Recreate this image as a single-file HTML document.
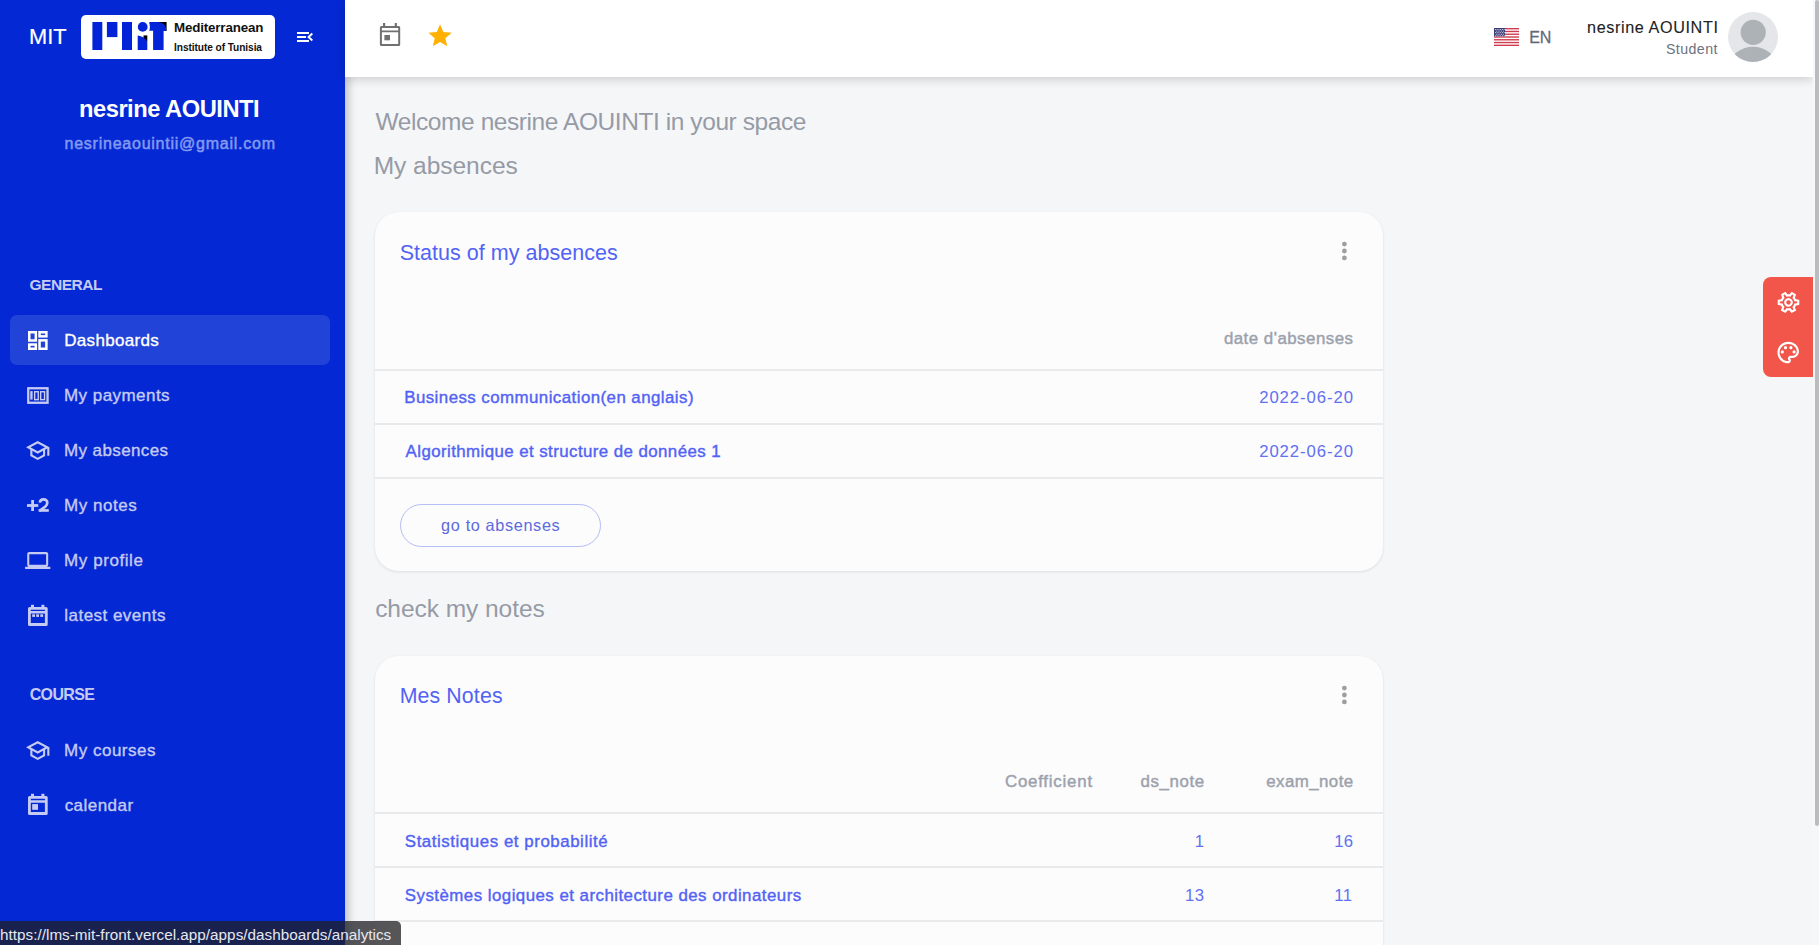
<!DOCTYPE html>
<html><head><meta charset="utf-8"><title>Dashboard</title>
<style>
*{margin:0;padding:0;box-sizing:border-box}
html,body{width:1819px;height:945px;overflow:hidden;background:#f5f6f8;font-family:"Liberation Sans",sans-serif}
.t{position:absolute;white-space:nowrap}
.bm{display:inline-block;width:0;height:0;vertical-align:baseline}
.abs{position:absolute}
#sidebar{left:0;top:0;width:345px;height:945px;background:#0429d4;box-shadow:2px 0 10px rgba(0,0,0,0.28)}
#header{left:345px;top:0;width:1468px;height:77px;background:#fff;box-shadow:0 2px 10px rgba(0,0,0,0.18)}
.card{position:absolute;left:375px;width:1008px;background:#fcfcfd;border-radius:24px;box-shadow:0 1px 3px rgba(0,0,0,0.10)}
.hl{position:absolute;left:375px;width:1008px;height:2px;background:#e9eaec}
</style></head><body>
<div id="sidebar" class="abs"></div>
<div id="header" class="abs"></div>
<div class="abs" style="left:10px;top:315px;width:320px;height:50px;border-radius:7px;background:#2143d8"></div>
<div class="abs" style="left:81px;top:15px;width:194px;height:44px;border-radius:5px;background:#fff"></div>
<div class="card" style="top:212px;height:359px"></div>
<div class="card" style="top:656px;height:320px"></div>
<div class="hl" style="top:369px"></div>
<div class="hl" style="top:423px"></div>
<div class="hl" style="top:477px"></div>
<div class="hl" style="top:812px"></div>
<div class="hl" style="top:866px"></div>
<div class="hl" style="top:920px"></div>
<div class="abs" style="left:400px;top:504px;width:201px;height:43px;border-radius:22px;border:1px solid #b4bdf4"></div>
<div class="abs" style="left:1763px;top:277px;width:50px;height:100px;border-radius:8px 0 0 8px;background:#f2564b"></div>
<div class="abs" style="left:1813px;top:0;width:6px;height:945px;background:#f6f7f9"></div>
<div class="abs" style="left:1815px;top:0;width:4px;height:826px;border-radius:2px;background:#bbbcbf"></div>
<svg class="abs" style="left:0;top:0" width="1819" height="945" viewBox="0 0 1819 945">
<defs>
<clipPath id="avc"><circle cx="1753" cy="37" r="25"/></clipPath>
<pattern id="stars" x="1494" y="28" width="2" height="2" patternUnits="userSpaceOnUse"><rect width="2" height="2" fill="#3d3f7a"/><rect x="0.5" y="0.5" width="1" height="1" fill="#c9cbe0"/></pattern>
</defs>
<!-- logo -->
<g fill="#0323d8">
<rect x="92.4" y="22" width="9.9" height="28"/>
<rect x="106.9" y="22" width="10.5" height="15.1"/>
<rect x="122" y="22" width="10" height="28"/>
</g>
<rect x="143.5" y="35.4" width="3.8" height="6" fill="#000"/>
<path d="M137.7 35.4 Q144.5 36.2 147.3 41.8 V50 H137.7Z" fill="#0323d8"/>
<rect x="158" y="22" width="8.6" height="8.8" fill="#000"/>
<path d="M149.3 22 H158 A8.6 8.8 0 0 1 166.6 30.8 H149.3Z" fill="#0323d8"/>
<rect x="153.1" y="30" width="10.5" height="20" fill="#0323d8"/>
<circle cx="142.7" cy="26.9" r="7.2" fill="#fff"/>
<circle cx="142.7" cy="26.9" r="4.9" fill="#0323d8"/>
<!-- hamburger -->
<g stroke="#fff" stroke-width="2" fill="none">
<path d="M297 33H309M297 37H306M297 41H309"/>
<path d="M312.3 33.6 L308.6 37 L312.3 40.4"/>
</g>
<!-- dashboards icon -->
<g stroke="#fff" stroke-width="2.5" fill="none">
<rect x="29.25" y="332.25" width="6.6" height="8.25"/>
<rect x="39.55" y="332.25" width="6.85" height="4.1"/>
<rect x="29.25" y="344.55" width="6.6" height="4.2"/>
<rect x="39.55" y="340.35" width="6.85" height="8.4"/>
</g>
<!-- payments icon -->
<g fill="none" stroke="#c6cbf3">
<rect x="28.25" y="388.25" width="19.3" height="14.5" stroke-width="2.3"/>
<rect x="34.65" y="391.75" width="3.6" height="7.9" stroke-width="1.4"/>
<rect x="40.65" y="391.75" width="3.9" height="7.9" stroke-width="1.4"/>
</g>
<rect x="30.3" y="391.1" width="2.3" height="8.5" fill="#c6cbf3"/>
<!-- school icons -->
<path transform="translate(25,437.8) scale(1.06)" fill="#c6cbf3" d="M12 3L1 9l4 2.18v6L12 21l7-3.82v-6l2-1.09V17h2V9L12 3zm6.82 6L12 12.72 5.18 9 12 5.28 18.82 9zM17 15.99l-5 2.73-5-2.73v-3.72L12 15l5-2.73v3.72z"/>
<path transform="translate(25,737.8) scale(1.06)" fill="#c6cbf3" d="M12 3L1 9l4 2.18v6L12 21l7-3.82v-6l2-1.09V17h2V9L12 3zm6.82 6L12 12.72 5.18 9 12 5.28 18.82 9zM17 15.99l-5 2.73-5-2.73v-3.72L12 15l5-2.73v3.72z"/>
<!-- +2 -->
<g fill="#c6cbf3">
<rect x="27" y="504.1" width="11.2" height="2.8"/>
<rect x="31.2" y="500" width="2.8" height="11"/>
</g>
<path d="M39.9 502.6 C40 500.5 41.6 499.3 43.6 499.3 C45.7 499.3 47.3 500.7 47.3 502.7 C47.3 504.1 46.6 505.3 45.4 506.5 L39.6 510.9" fill="none" stroke="#c6cbf3" stroke-width="2.7"/><rect x="38.6" y="509.1" width="10.2" height="2.7" fill="#c6cbf3"/>
<!-- laptop -->
<path transform="translate(25.1,547.9) scale(1.05)" fill="#c6cbf3" d="M20 18c1.1 0 1.99-.9 1.99-2L22 6c0-1.1-.9-2-2-2H4c-1.1 0-2 .9-2 2v10c0 1.1.9 2 2 2H0v2h24v-2h-4zM4 6h16v10H4V6z"/>
<!-- events calendar -->
<g fill="#c6cbf3">
<path fill-rule="evenodd" d="M29.5 607h16.7a1.5 1.5 0 0 1 1.5 1.5v15.9a1.5 1.5 0 0 1-1.5 1.5h-16.7a1.5 1.5 0 0 1-1.5-1.5v-15.9a1.5 1.5 0 0 1 1.5-1.5z M30.8 613.6v9.5h14.1v-9.5z M30.8 609.8v1.3h14.1v-1.3z"/>
<rect x="31" y="604.8" width="3" height="3"/>
<rect x="41.4" y="604.8" width="3" height="3"/>
<rect x="32.2" y="614.3" width="2.8" height="2.6"/>
<rect x="36.2" y="614.3" width="2.8" height="2.6"/>
<rect x="40.3" y="614.3" width="2.8" height="2.6"/>
</g>
<!-- calendar -->
<g fill="#c6cbf3">
<path fill-rule="evenodd" d="M29.5 796h16.7a1.5 1.5 0 0 1 1.5 1.5v15.9a1.5 1.5 0 0 1-1.5 1.5h-16.7a1.5 1.5 0 0 1-1.5-1.5v-15.9a1.5 1.5 0 0 1 1.5-1.5z M30.8 802.7v9.4h14.1v-9.4z M30.8 798.8v1.4h14.1v-1.4z"/>
<rect x="31" y="793.8" width="3" height="3"/>
<rect x="41.4" y="793.8" width="3" height="3"/>
<rect x="32.2" y="804.1" width="5.8" height="5.7"/>
</g>
<!-- header calendar -->
<g fill="#707070">
<path fill-rule="evenodd" d="M381.4 25.9h17.3a1.5 1.5 0 0 1 1.5 1.5v17.1a1.5 1.5 0 0 1-1.5 1.5h-17.3a1.5 1.5 0 0 1-1.5-1.5v-17.1a1.5 1.5 0 0 1 1.5-1.5z M381.9 32.3v11.7h16.3v-11.7z M381.9 27.9v2.5h16.3v-2.5z"/>
<rect x="383" y="23" width="2.2" height="3.5"/>
<rect x="394.7" y="23" width="2.2" height="3.5"/>
<rect x="384.4" y="35" width="5.6" height="5.3"/>
</g>
<!-- star -->
<path transform="translate(426.07,21.87) scale(1.165)" fill="#ffb000" d="M12 17.27L18.18 21l-1.64-7.03L22 9.24l-7.19-.61L12 2 9.19 8.63 2 9.24l5.46 4.73L5.82 21z"/>
<!-- flag -->
<g>
<rect x="1494" y="28" width="25" height="18" fill="#fff"/>
<g fill="#cf3b50">
<rect x="1494" y="28" width="25" height="1.385"/>
<rect x="1494" y="30.77" width="25" height="1.385"/>
<rect x="1494" y="33.54" width="25" height="1.385"/>
<rect x="1494" y="36.31" width="25" height="1.385"/>
<rect x="1494" y="39.08" width="25" height="1.385"/>
<rect x="1494" y="41.85" width="25" height="1.385"/>
<rect x="1494" y="44.62" width="25" height="1.385"/>
</g>
<rect x="1494" y="28" width="11" height="8.3" fill="#3b3d78"/><g fill="#e6e7f0"><rect x="1495.00" y="29.00" width="0.9" height="0.9"/><rect x="1496.75" y="29.00" width="0.9" height="0.9"/><rect x="1498.50" y="29.00" width="0.9" height="0.9"/><rect x="1500.25" y="29.00" width="0.9" height="0.9"/><rect x="1502.00" y="29.00" width="0.9" height="0.9"/><rect x="1503.75" y="29.00" width="0.9" height="0.9"/><rect x="1495.88" y="30.60" width="0.9" height="0.9"/><rect x="1497.62" y="30.60" width="0.9" height="0.9"/><rect x="1499.38" y="30.60" width="0.9" height="0.9"/><rect x="1501.12" y="30.60" width="0.9" height="0.9"/><rect x="1502.88" y="30.60" width="0.9" height="0.9"/><rect x="1495.00" y="32.20" width="0.9" height="0.9"/><rect x="1496.75" y="32.20" width="0.9" height="0.9"/><rect x="1498.50" y="32.20" width="0.9" height="0.9"/><rect x="1500.25" y="32.20" width="0.9" height="0.9"/><rect x="1502.00" y="32.20" width="0.9" height="0.9"/><rect x="1503.75" y="32.20" width="0.9" height="0.9"/><rect x="1495.88" y="33.80" width="0.9" height="0.9"/><rect x="1497.62" y="33.80" width="0.9" height="0.9"/><rect x="1499.38" y="33.80" width="0.9" height="0.9"/><rect x="1501.12" y="33.80" width="0.9" height="0.9"/><rect x="1502.88" y="33.80" width="0.9" height="0.9"/><rect x="1495.00" y="35.40" width="0.9" height="0.9"/><rect x="1496.75" y="35.40" width="0.9" height="0.9"/><rect x="1498.50" y="35.40" width="0.9" height="0.9"/><rect x="1500.25" y="35.40" width="0.9" height="0.9"/><rect x="1502.00" y="35.40" width="0.9" height="0.9"/><rect x="1503.75" y="35.40" width="0.9" height="0.9"/></g>
</g>
<!-- avatar -->
<circle cx="1753" cy="37" r="25" fill="#e4e6e9"/>
<g clip-path="url(#avc)" fill="#adb2b7">
<circle cx="1753.2" cy="32.3" r="12.6"/>
<ellipse cx="1753" cy="66" rx="23" ry="19.3"/>
</g>
<!-- kebabs -->
<g fill="#9e9e9e">
<circle cx="1344.4" cy="244.1" r="2.4"/><circle cx="1344.4" cy="251" r="2.4"/><circle cx="1344.4" cy="257.9" r="2.4"/>
<circle cx="1344.4" cy="688.1" r="2.4"/><circle cx="1344.4" cy="695" r="2.4"/><circle cx="1344.4" cy="701.9" r="2.4"/>
</g>
<!-- gear -->
<path transform="translate(1788.5,302.4) scale(1.08) rotate(30) translate(-12,-12)" fill="#fff" d="M12,8A4,4 0 0,1 16,12A4,4 0 0,1 12,16A4,4 0 0,1 8,12A4,4 0 0,1 12,8M12,10A2,2 0 0,0 10,12A2,2 0 0,0 12,14A2,2 0 0,0 14,12A2,2 0 0,0 12,10M10,22C9.75,22 9.54,21.82 9.5,21.58L9.13,18.93C8.5,18.68 7.96,18.34 7.44,17.94L4.950,18.95C4.73,19.03 4.46,18.95 4.34,18.73L2.34,15.27C2.21,15.05 2.27,14.78 2.46,14.63L4.57,12.97L4.5,12L4.57,11L2.46,9.37C2.27,9.22 2.21,8.95 2.34,8.73L4.34,5.27C4.46,5.05 4.73,4.96 4.95,5.05L7.44,6.05C7.96,5.66 8.5,5.32 9.13,5.07L9.5,2.42C9.54,2.18 9.75,2 10,2H14C14.25,2 14.46,2.18 14.5,2.42L14.87,5.07C15.5,5.32 16.04,5.66 16.56,6.05L19.05,5.05C19.27,4.96 19.54,5.05 19.66,5.27L21.66,8.73C21.79,8.95 21.73,9.22 21.54,9.37L19.43,11L19.5,12L19.43,13L21.54,14.63C21.73,14.78 21.79,15.05 21.66,15.27L19.66,18.73C19.54,18.95 19.27,19.04 19.05,18.95L16.56,17.95C16.04,18.34 15.5,18.68 14.87,18.93L14.5,21.58C14.46,21.82 14.25,22 14,22H10M11.25,4L10.88,6.61C9.68,6.86 8.62,7.5 7.85,8.39L5.44,7.35L4.69,8.65L6.8,10.2C6.4,11.37 6.4,12.64 6.8,13.8L4.68,15.36L5.43,16.66L7.86,15.62C8.63,16.5 9.68,17.14 10.87,17.38L11.24,20H12.76L13.13,17.39C14.32,17.140 15.37,16.5 16.14,15.62L18.57,16.66L19.32,15.36L17.2,13.81C17.6,12.64 17.6,11.37 17.2,10.2L19.31,8.65L18.56,7.35L16.15,8.39C15.38,7.5 14.33,6.86 13.12,6.62L12.75,4H11.25Z"/>
<!-- palette -->
<g transform="translate(1788.2,352.5) scale(1.075) translate(-12,-12)" fill="#fff">
<path d="M12 22C6.49 22 2 17.51 2 12S6.49 2 12 2s10 4.04 10 9c0 3.31-2.69 6-6 6h-1.77c-.28 0-.5.22-.5.5 0 .12.05.23.13.33.41.47.64 1.06.64 1.67 0 1.38-1.12 2.5-2.5 2.5zm0-18c-4.410 0-8 3.59-8 8s3.59 8 8 8c.28 0 .5-.22.5-.5 0-.16-.08-.28-.14-.35-.41-.46-.63-1.05-.63-1.65 0-1.38 1.12-2.5 2.5-2.5H16c2.21 0 4-1.79 4-4 0-3.86-3.59-7-8-7z"/>
<circle cx="6.5" cy="11.5" r="1.5"/><circle cx="9.5" cy="7.5" r="1.5"/><circle cx="14.5" cy="7.5" r="1.5"/><circle cx="17.5" cy="11.5" r="1.5"/>
</g>
</svg>

<div class="t" id="t0" style="left:29.01px;top:26.01px;font-size:21.80px;line-height:21.80px;letter-spacing:-0.024px;font-weight:normal;color:#fff;-webkit-text-stroke:0.2px #fff;">MIT<span class="bm"></span></div>
<div class="t" id="t1" style="left:173.91px;top:21.01px;font-size:13.37px;line-height:13.37px;letter-spacing:-0.149px;font-weight:bold;color:#111;">Mediterranean<span class="bm"></span></div>
<div class="t" id="t2" style="left:174.12px;top:42.70px;font-size:10.17px;line-height:10.17px;letter-spacing:-0.085px;font-weight:bold;color:#111;">Institute of Tunisia<span class="bm"></span></div>
<div class="t" id="t3" style="left:79.04px;top:97.60px;font-size:23.69px;line-height:23.69px;letter-spacing:-0.486px;font-weight:bold;color:#fff;">nesrine AOUINTI<span class="bm"></span></div>
<div class="t" id="t4" style="left:64.54px;top:135.81px;font-size:16.00px;line-height:16.00px;letter-spacing:0.758px;font-weight:normal;color:#8499f0;-webkit-text-stroke:0.5px #8499f0;">nesrineaouintii@gmail.com<span class="bm"></span></div>
<div class="t" id="t5" style="left:29.56px;top:276.81px;font-size:15.55px;line-height:15.55px;letter-spacing:-0.520px;font-weight:bold;color:#c6cbf3;">GENERAL<span class="bm"></span></div>
<div class="t" id="t6" style="left:29.74px;top:687.11px;font-size:15.99px;line-height:15.99px;letter-spacing:-0.665px;font-weight:bold;color:#c6cbf3;">COURSE<span class="bm"></span></div>
<div class="t" id="t7" style="left:64.20px;top:332.10px;font-size:17.01px;line-height:17.01px;letter-spacing:0.335px;font-weight:normal;color:#fff;-webkit-text-stroke:0.35px #fff;">Dashboards<span class="bm"></span></div>
<div class="t" id="t8" style="left:64.00px;top:387.22px;font-size:17.01px;line-height:17.01px;letter-spacing:0.449px;font-weight:normal;color:#c6cbf3;-webkit-text-stroke:0.35px #c6cbf3;">My payments<span class="bm"></span></div>
<div class="t" id="t9" style="left:64.00px;top:442.10px;font-size:17.01px;line-height:17.01px;letter-spacing:0.392px;font-weight:normal;color:#c6cbf3;-webkit-text-stroke:0.35px #c6cbf3;">My absences<span class="bm"></span></div>
<div class="t" id="t10" style="left:64.00px;top:497.01px;font-size:17.01px;line-height:17.01px;letter-spacing:0.531px;font-weight:normal;color:#c6cbf3;-webkit-text-stroke:0.35px #c6cbf3;">My notes<span class="bm"></span></div>
<div class="t" id="t11" style="left:64.00px;top:552.01px;font-size:17.01px;line-height:17.01px;letter-spacing:0.582px;font-weight:normal;color:#c6cbf3;-webkit-text-stroke:0.35px #c6cbf3;">My profile<span class="bm"></span></div>
<div class="t" id="t12" style="left:64.25px;top:607.01px;font-size:17.01px;line-height:17.01px;letter-spacing:0.474px;font-weight:normal;color:#c6cbf3;-webkit-text-stroke:0.35px #c6cbf3;">latest events<span class="bm"></span></div>
<div class="t" id="t13" style="left:64.00px;top:742.01px;font-size:17.01px;line-height:17.01px;letter-spacing:0.508px;font-weight:normal;color:#c6cbf3;-webkit-text-stroke:0.35px #c6cbf3;">My courses<span class="bm"></span></div>
<div class="t" id="t14" style="left:64.68px;top:797.01px;font-size:17.01px;line-height:17.01px;letter-spacing:0.453px;font-weight:normal;color:#c6cbf3;-webkit-text-stroke:0.35px #c6cbf3;">calendar<span class="bm"></span></div>
<div class="t" id="t15" style="left:1529.19px;top:29.81px;font-size:16.00px;line-height:16.00px;letter-spacing:-0.200px;font-weight:normal;color:#5f6b7a;-webkit-text-stroke:0.3px #5f6b7a;">EN<span class="bm"></span></div>
<div class="t" id="t16" style="left:1587.02px;top:18.81px;font-size:16.20px;line-height:16.20px;letter-spacing:0.610px;font-weight:normal;color:#222;-webkit-text-stroke:0.1px #222;">nesrine AOUINTI<span class="bm"></span></div>
<div class="t" id="t17" style="left:1665.96px;top:41.60px;font-size:14.20px;line-height:14.20px;letter-spacing:0.433px;font-weight:normal;color:#6b7280;">Student<span class="bm"></span></div>
<div class="t" id="t18" style="left:375.59px;top:109.72px;font-size:24.50px;line-height:24.50px;letter-spacing:-0.427px;font-weight:normal;color:#959ba6;">Welcome nesrine AOUINTI in your space<span class="bm"></span></div>
<div class="t" id="t19" style="left:373.68px;top:153.61px;font-size:24.56px;line-height:24.56px;letter-spacing:-0.052px;font-weight:normal;color:#959ba6;">My absences<span class="bm"></span></div>
<div class="t" id="t20" style="left:375.16px;top:596.80px;font-size:24.56px;line-height:24.56px;letter-spacing:-0.071px;font-weight:normal;color:#959ba6;">check my notes<span class="bm"></span></div>
<div class="t" id="t21" style="left:399.72px;top:242.91px;font-size:21.51px;line-height:21.51px;letter-spacing:0.027px;font-weight:normal;color:#5263f4;">Status of my absences<span class="bm"></span></div>
<div class="t" id="t22" style="left:1223.89px;top:330.51px;font-size:16.86px;line-height:16.86px;letter-spacing:0.489px;font-weight:normal;color:#9ca2ac;-webkit-text-stroke:0.45px #9ca2ac;">date d'absenses<span class="bm"></span></div>
<div class="t" id="t23" style="left:404.22px;top:390.01px;font-size:16.86px;line-height:16.86px;letter-spacing:0.447px;font-weight:normal;color:#5262f4;-webkit-text-stroke:0.4px #5262f4;">Business communication(en anglais)<span class="bm"></span></div>
<div class="t" id="t24" style="left:405.57px;top:444.21px;font-size:16.86px;line-height:16.86px;letter-spacing:0.423px;font-weight:normal;color:#5262f4;-webkit-text-stroke:0.4px #5262f4;">Algorithmique et structure de données 1<span class="bm"></span></div>
<div class="t" id="t25" style="left:1259.16px;top:389.91px;font-size:16.72px;line-height:16.72px;letter-spacing:0.932px;font-weight:normal;color:#6270f1;">2022-06-20<span class="bm"></span></div>
<div class="t" id="t26" style="left:1259.16px;top:443.91px;font-size:16.72px;line-height:16.72px;letter-spacing:0.932px;font-weight:normal;color:#6270f1;">2022-06-20<span class="bm"></span></div>
<div class="t" id="t27" style="left:441.12px;top:517.00px;font-size:16.28px;line-height:16.28px;letter-spacing:0.635px;font-weight:normal;color:#5b6ade;">go to absenses<span class="bm"></span></div>
<div class="t" id="t28" style="left:399.65px;top:685.80px;font-size:21.30px;line-height:21.30px;letter-spacing:0.140px;font-weight:normal;color:#5263f4;">Mes Notes<span class="bm"></span></div>
<div class="t" id="t29" style="left:1004.94px;top:774.01px;font-size:16.86px;line-height:16.86px;letter-spacing:0.782px;font-weight:normal;color:#9ca2ac;-webkit-text-stroke:0.45px #9ca2ac;">Coefficient<span class="bm"></span></div>
<div class="t" id="t30" style="left:1140.59px;top:774.01px;font-size:16.86px;line-height:16.86px;letter-spacing:0.576px;font-weight:normal;color:#9ca2ac;-webkit-text-stroke:0.45px #9ca2ac;">ds_note<span class="bm"></span></div>
<div class="t" id="t31" style="left:1266.28px;top:774.01px;font-size:16.86px;line-height:16.86px;letter-spacing:0.430px;font-weight:normal;color:#9ca2ac;-webkit-text-stroke:0.45px #9ca2ac;">exam_note<span class="bm"></span></div>
<div class="t" id="t32" style="left:404.83px;top:833.91px;font-size:16.86px;line-height:16.86px;letter-spacing:0.555px;font-weight:normal;color:#5262f4;-webkit-text-stroke:0.4px #5262f4;">Statistiques et probabilité<span class="bm"></span></div>
<div class="t" id="t33" style="left:404.83px;top:887.71px;font-size:16.86px;line-height:16.86px;letter-spacing:0.467px;font-weight:normal;color:#5262f4;-webkit-text-stroke:0.4px #5262f4;">Systèmes logiques et architecture des ordinateurs<span class="bm"></span></div>
<div class="t" id="t34" style="left:1194.82px;top:833.91px;font-size:16.72px;line-height:16.72px;letter-spacing:0.000px;font-weight:normal;color:#6270f1;">1<span class="bm"></span></div>
<div class="t" id="t35" style="left:1334.14px;top:833.91px;font-size:16.72px;line-height:16.72px;letter-spacing:0.400px;font-weight:normal;color:#6270f1;">16<span class="bm"></span></div>
<div class="t" id="t36" style="left:1185.04px;top:887.70px;font-size:16.72px;line-height:16.72px;letter-spacing:0.400px;font-weight:normal;color:#6270f1;">13<span class="bm"></span></div>
<div class="t" id="t37" style="left:1334.22px;top:887.70px;font-size:16.72px;line-height:16.72px;letter-spacing:0.400px;font-weight:normal;color:#6270f1;">11<span class="bm"></span></div>
<div class="abs" style="left:0;top:921px;width:401px;height:24px;border-radius:0 5px 0 0;background:rgba(33,33,37,0.76)"></div>
<div class="t" id="t38" style="left:0.04px;top:926.71px;font-size:15.26px;line-height:15.26px;letter-spacing:0.023px;font-weight:normal;color:#e6e8ef;">https://lms-mit-front.vercel.app/apps/dashboards/analytics<span class="bm"></span></div>
</body></html>
